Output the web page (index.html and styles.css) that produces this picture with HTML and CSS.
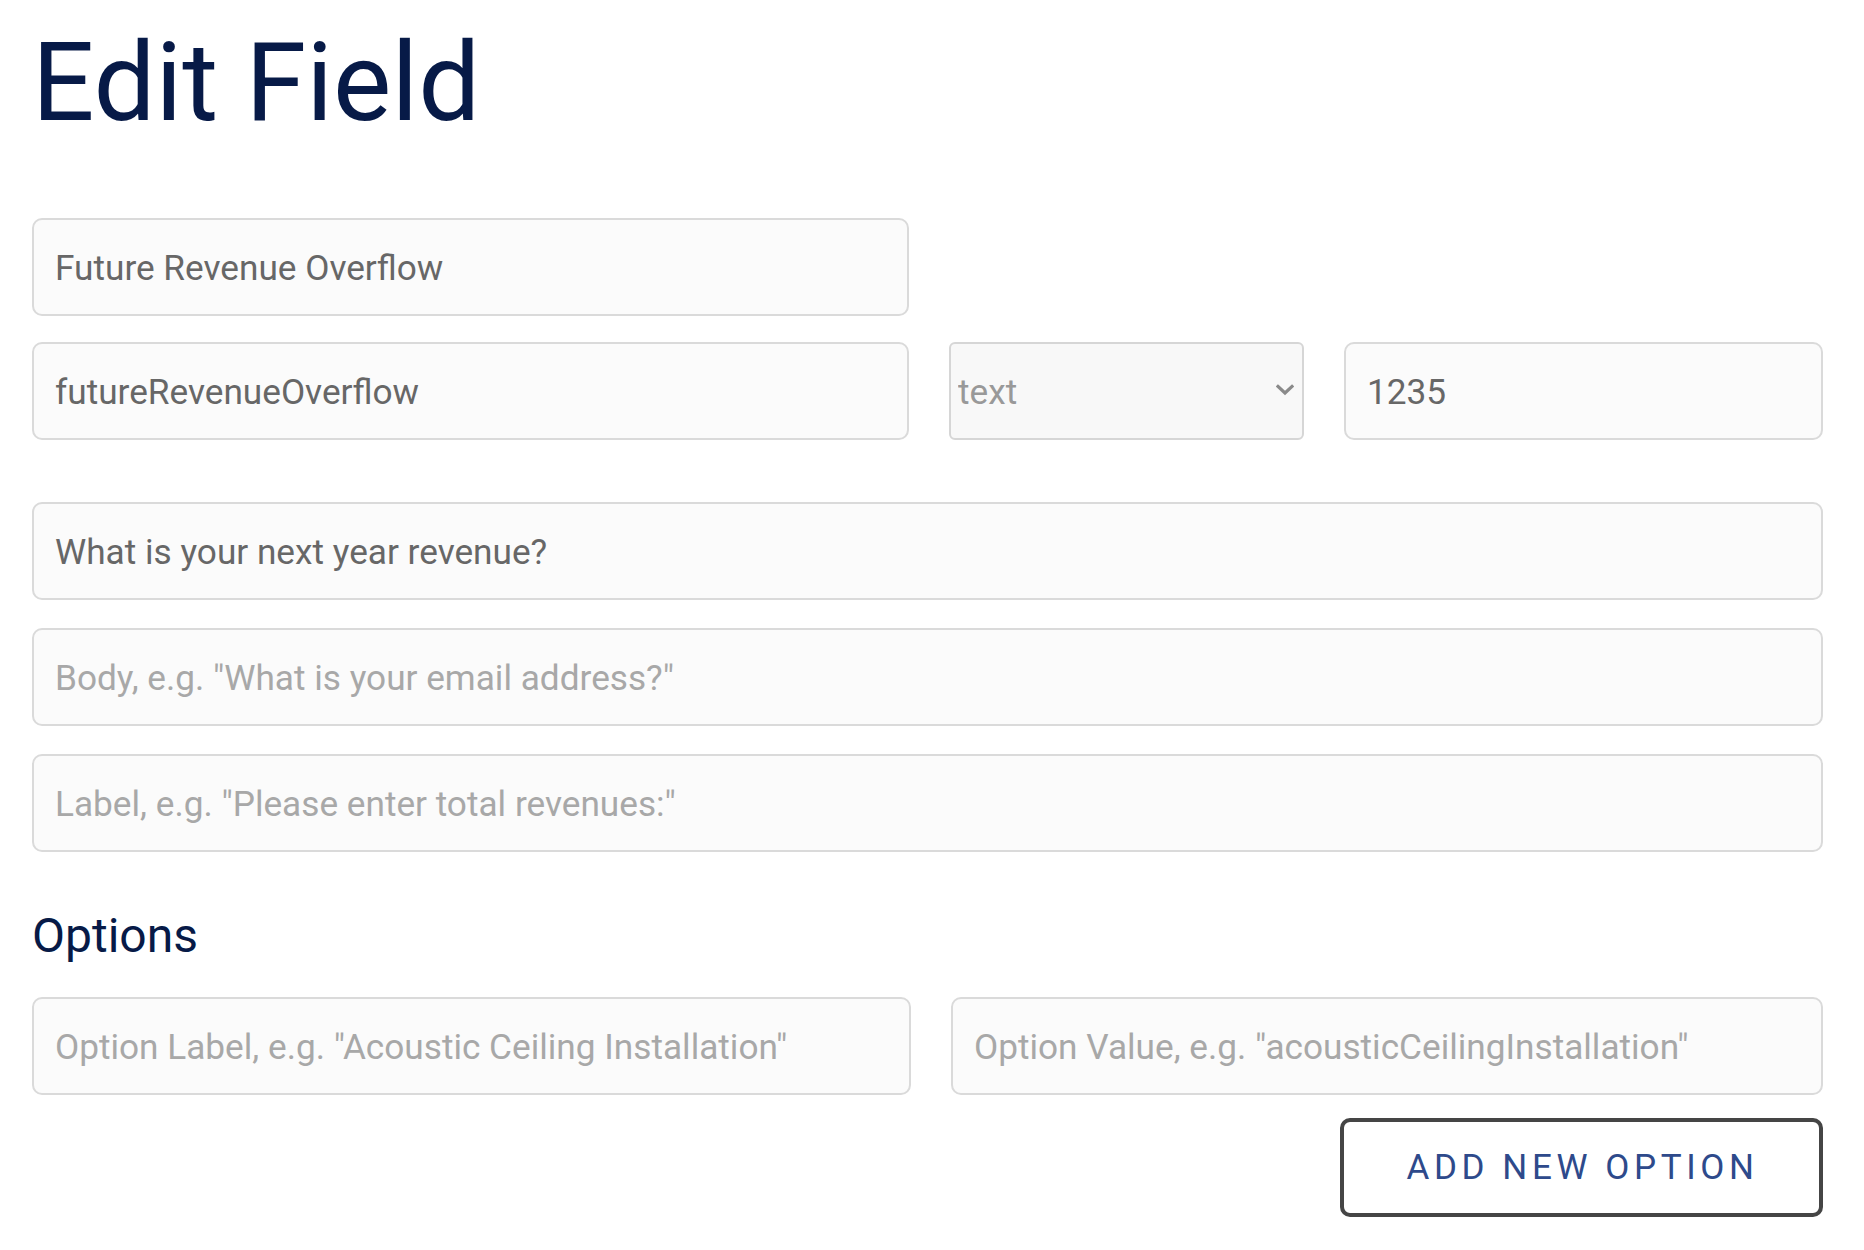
FILE: index.html
```html
<!DOCTYPE html>
<html lang="en">
<head>
<meta charset="utf-8">
<title>Edit Field</title>
<link rel="stylesheet" href="styles.css">
</head>
<body>
<main class="page">
  <h1 class="title">Edit Field</h1>

  <div class="row row-name">
    <input class="field" type="text" value="Future Revenue Overflow">
  </div>

  <div class="row row-key">
    <input class="field" type="text" value="futureRevenueOverflow">
    <div class="select-wrap">
      <select class="select">
        <option>text</option>
      </select>
      <svg class="chevron" viewBox="0 0 18 12" width="18" height="12" aria-hidden="true">
        <path d="M2 2.5 L9 9 L16 2.5" fill="none" stroke="#8a8a8a" stroke-width="3.2" stroke-linecap="square"/>
      </svg>
    </div>
    <input class="field" type="text" value="1235">
  </div>

  <div class="stack">
    <input class="field" type="text" value="What is your next year revenue?">
    <input class="field" type="text" placeholder="Body, e.g. &quot;What is your email address?&quot;">
    <input class="field" type="text" placeholder="Label, e.g. &quot;Please enter total revenues:&quot;">
  </div>

  <h2 class="section">Options</h2>

  <div class="row row-options">
    <input class="field" type="text" placeholder="Option Label, e.g. &quot;Acoustic Ceiling Installation&quot;">
    <input class="field" type="text" placeholder="Option Value, e.g. &quot;acousticCeilingInstallation&quot;">
  </div>

  <div class="actions">
    <button class="btn-outline" type="button">Add new option</button>
  </div>
</main>
</body>
</html>
```

FILE: styles.css
```css
* {
  box-sizing: border-box;
}

html, body {
  margin: 0;
  padding: 0;
  background: #ffffff;
}

body {
  font-family: Roboto, "Liberation Sans", Arial, sans-serif;
}

.page {
  width: 1791px;
  margin-left: 32px;
  padding-bottom: 20px;
}

.title {
  margin: 18px 0 0;
  font-size: 110px;
  line-height: 130px;
  font-weight: 400;
  color: #071a47;
}

.row {
  display: grid;
}

.row-name {
  margin-top: 70px;
  grid-template-columns: 877px;
}

.row-key {
  margin-top: 26px;
  grid-template-columns: 877px 355px 479px;
  column-gap: 40px;
}

.stack {
  margin-top: 62px;
  display: flex;
  flex-direction: column;
  gap: 28px;
}

.row-options {
  margin-top: 34px;
  grid-template-columns: 879px 1fr;
  column-gap: 40px;
}

.field {
  display: block;
  width: 100%;
  height: 98px;
  margin: 0;
  padding: 1px 20px 0 21px;
  border: 2px solid #dadada;
  border-radius: 10px;
  background: #fbfbfb;
  font-family: Roboto, "Liberation Sans", Arial, sans-serif;
  font-size: 35.2px;
  color: #676767;
  outline: none;
}

.field::placeholder {
  color: #a8a8a8;
  opacity: 1;
}

.select-wrap {
  position: relative;
  height: 98px;
}

.select {
  display: block;
  width: 100%;
  height: 98px;
  margin: 0;
  padding: 1px 40px 0 7px;
  border: 2px solid #d6d6d6;
  border-radius: 6px;
  background: #f8f8f8;
  font-family: Roboto, "Liberation Sans", Arial, sans-serif;
  font-size: 35.2px;
  color: #999999;
  -webkit-appearance: none;
  appearance: none;
  outline: none;
}

.chevron {
  position: absolute;
  right: 10px;
  top: 42px;
  pointer-events: none;
}

.section {
  margin: 56px 0 0;
  font-size: 48px;
  line-height: 55px;
  font-weight: 400;
  color: #071a47;
}

.actions {
  margin-top: 23px;
  display: flex;
  justify-content: flex-end;
}

.btn-outline {
  width: 483px;
  height: 99px;
  margin: 0;
  padding: 0 0 0 2px;
  border: 4px solid #454545;
  border-radius: 10px;
  background: #ffffff;
  font-family: Roboto, "Liberation Sans", Arial, sans-serif;
  font-size: 35px;
  font-weight: 400;
  letter-spacing: 4.6px;
  text-transform: uppercase;
  color: #2e4a8b;
  cursor: pointer;
}
```
